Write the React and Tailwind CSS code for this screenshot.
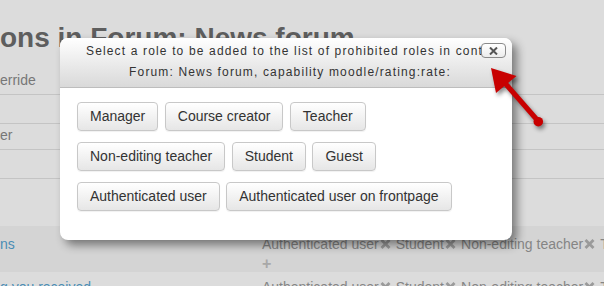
import React from "react";

const roleRows = [
    ["Manager", "Course creator", "Teacher"],
    ["Non-editing teacher", "Student", "Guest"],
    ["Authenticated user", "Authenticated user on frontpage"],
];

function RemoveIcon() {
    return (
        <svg width="11" height="10" viewBox="0 0 11 10" className="inline-block shrink-0 ml-[1px]">
            <path d="M1.5 1 L9.5 9 M9.5 1 L1.5 9" stroke="#9a9a9a" strokeWidth="2.8" strokeLinecap="butt" />
        </svg>
    );
}

function RoleList() {
    const roles = ["Authenticated user", "Student", "Non-editing teacher", "Teacher"];
    return (
        <div className="flex items-center whitespace-nowrap text-[#858585]">
            {roles.map((r, i) => (
                <span key={r} className={"flex items-center shrink-0 " + (i > 0 ? "ml-[5px]" : "")}>
                    <span>{r}</span>
                    <RemoveIcon />
                </span>
            ))}
        </div>
    );
}

function RoleButton({ label }) {
    return (
        <button className="px-[12px] py-[4px] leading-[19px] text-[14px] text-[#333] border border-[#c8c8c8] rounded-[4px] bg-gradient-to-b from-white to-[#e6e6e6] shadow-[0_1px_1px_rgba(0,0,0,0.06)] whitespace-nowrap">
            {label}
        </button>
    );
}

export default function App() {
    return (
        <div className="relative w-[604px] h-[286px] overflow-hidden bg-[#dcdcdc] font-['Liberation_Sans',Arial,sans-serif]">
            {/* page behind the dialog */}
            <h2 className="pt-[22px] text-[28px] leading-[32px] font-bold text-[#5e5e5e] whitespace-nowrap">
                ons in Forum: News forum
            </h2>
            <div className="text-[14px] leading-[20px]">
                <div className="flex items-end h-[41px] pb-[4px] border-b border-[#c4c4c4] text-[#777]">
                    erride
                </div>
                <div className="h-[29px] border-b border-[#c4c4c4]" />
                <div className="h-[26px] pt-[1px] border-b border-[#c4c4c4] text-[#777]">er</div>
                <div className="h-[29px] border-b border-[#c4c4c4]" />
                <div className="h-[47px]" />
                <div className="flex h-[46px] pt-[8px] bg-[#d4d4d4]">
                    <div className="w-[262px] shrink-0 text-[#4a8db5]">ns</div>
                    <div>
                        <RoleList />
                        <div className="text-[#a8a8a8] font-bold text-[16px] leading-[20px]">+</div>
                    </div>
                </div>
                <div className="flex pt-[5px]">
                    <div className="w-[262px] shrink-0 text-[#4a8db5] whitespace-nowrap">g you received</div>
                    <RoleList />
                </div>
            </div>

            {/* dialog */}
            <div className="absolute left-[60px] top-[38px] w-[452px] h-[202px] rounded-[8px] bg-white overflow-hidden shadow-[5px_5px_10px_rgba(0,0,0,0.45)]">
                <div className="relative pt-[3px] pb-[4px] pl-[10px] pr-[2px] text-[12px] leading-[21px] tracking-[1.15px] text-[#333] text-center bg-gradient-to-b from-white to-[#d9d9d9] border-b border-[#bdbdbd]">
                    <div className="whitespace-nowrap text-left pl-[16px] overflow-hidden">
                        Select a role to be added to the list of prohibited roles in context
                    </div>
                    <div className="whitespace-nowrap">Forum: News forum, capability moodle/rating:rate:</div>
                    <button className="absolute right-[6px] top-[5px] w-[25px] h-[15px] flex items-center justify-center rounded-[4px] border border-[#8a8a8a] bg-gradient-to-b from-white to-[#ececec]">
                        <svg width="9" height="8" viewBox="0 0 9 8">
                            <path d="M1 0.5 L8 7.5 M8 0.5 L1 7.5" stroke="#555" strokeWidth="2" />
                        </svg>
                    </button>
                </div>
                <div className="pt-[14px] pl-[17px] flex flex-col gap-[11px]">
                    {roleRows.map((row, i) => (
                        <div key={i} className="flex gap-[6.5px]">
                            {row.map((r) => (
                                <RoleButton key={r} label={r} />
                            ))}
                        </div>
                    ))}
                </div>
            </div>

            {/* red arrow pointing at the close button */}
            <svg
                className="absolute left-[480px] top-[60px] drop-shadow-[2px_3px_2px_rgba(0,0,0,0.45)]"
                width="70"
                height="72"
                viewBox="0 0 70 72"
            >
                <path d="M24 22 L58.5 61.5" stroke="#c80000" strokeWidth="5" />
                <path d="M11 8 L16 33 L36.5 16 Z" fill="#c80000" />
                <circle cx="58.3" cy="61.7" r="4.8" fill="#c80000" />
            </svg>
        </div>
    );
}
